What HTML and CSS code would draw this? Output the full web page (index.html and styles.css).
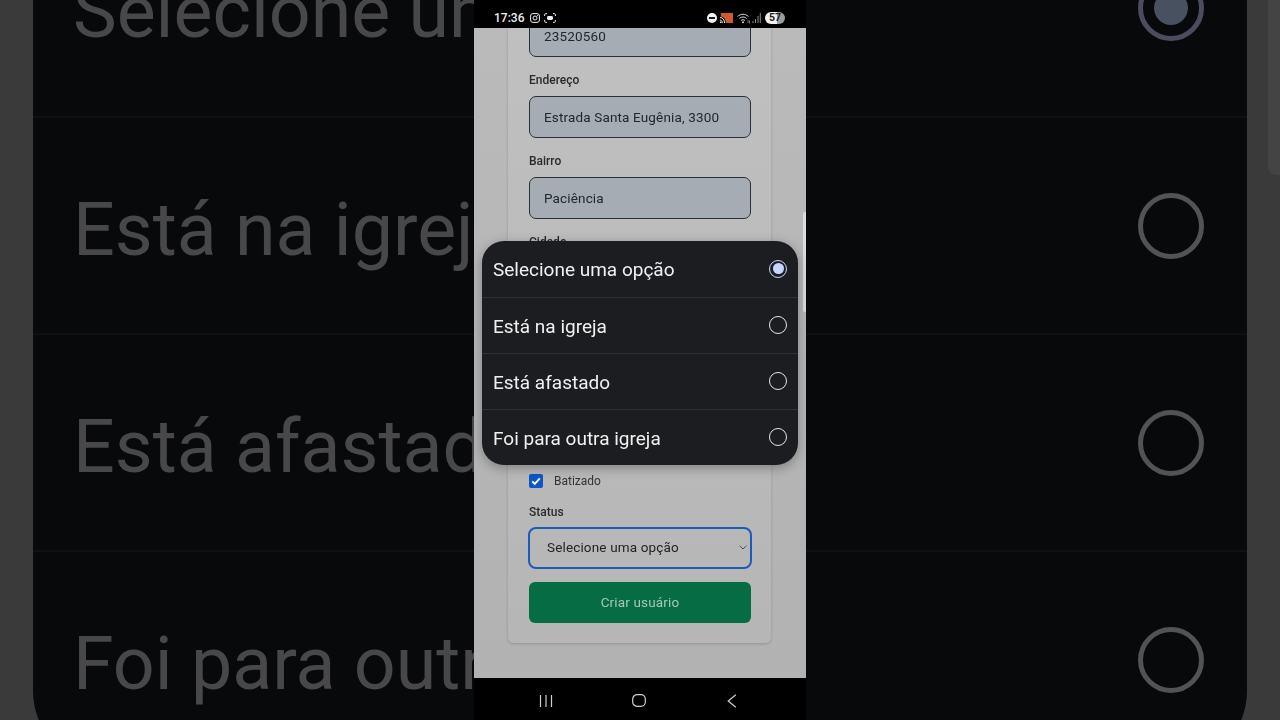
FILE: index.html
```html
<!DOCTYPE html>
<html lang="pt-BR">
<head>
<meta charset="utf-8">
<title>Criar usuário</title>
<link rel="stylesheet" href="styles.css">
</head>
<body>
<div class="stage">
  <div class="side side-left">
    <div class="strip"></div>
    <div class="panel panel-left">
      <div class="bg-row">Selecione uma opção</div>
      <div class="bg-row">Está na igreja</div>
      <div class="bg-row">Está afastado</div>
      <div class="bg-row">Foi para outra igreja</div>
    </div>
  </div>

  <div class="phone">
    <header class="statusbar">
      <span class="time">17:36</span>
      <svg class="ic-insta" viewBox="0 0 10 10"><rect x="0.6" y="0.6" width="8.8" height="8.8" rx="2.4" fill="none" stroke="#eee" stroke-width="1"/><circle cx="5" cy="5" r="2" fill="none" stroke="#eee" stroke-width="1"/><circle cx="7.4" cy="2.6" r=".6" fill="#eee"/></svg>
      <svg class="ic-shot" viewBox="0 0 12 10"><path d="M.6 3V1.8Q.6.6 1.8.6H3M9 .6h1.2q1.2 0 1.2 1.2V3M.6 7v1.2q0 1.2 1.2 1.2H3M9 9.400h1.200q1.200 0 1.200-1.200V7" fill="none" stroke="#eee" stroke-width="1"/><rect x="3" y="3" width="6" height="4" rx="1.400" fill="#eee"/></svg>
      <span class="status-gap"></span>
      <svg class="ic-dnd" viewBox="0 0 10 10"><circle cx="5" cy="5" r="5" fill="#f2f2f2"/><rect x="2" y="4.100" width="6" height="1.800" fill="#000"/></svg>
      <svg class="ic-cast" viewBox="0 0 13 10"><path d="M.8 0H13v10H5.800C5.800 6.400 4 3.800.8 3.500z" fill="#cf5a2b"/><path d="M0 4.500c2.900 0 4.500 2.300 4.500 5.500M0 7c1.500 0 2.300 1.300 2.300 3" fill="none" stroke="#eee" stroke-width="1"/><circle cx=".7" cy="9.300" r=".8" fill="#eee"/></svg>
      <svg class="ic-wifi" viewBox="0 0 13 11"><path d="M.5 3.500C3.800.5 8.200.5 11.500 3.500M2.300 5.500C4.600 3.500 7.400 3.500 9.700 5.500M4 7.500C5.200 6.500 6.800 6.500 8 7.500" fill="none" stroke="#ddd" stroke-width="1"/><circle cx="6" cy="9.300" r="1" fill="#ddd"/><path d="M11 7v3M12.500 7.500v3" stroke="#aaa" stroke-width=".7"/></svg>
      <svg class="ic-signal" viewBox="0 0 9 10"><path d="M1 10V8M3.500 10V6M6 10V3M8.300 10V0" stroke="#8a8a8a" stroke-width="1"/></svg>
      <span class="battery">57</span>
    </header>

    <main class="screen">
      <section class="card">
        <div class="input">23520560</div>
        <div class="label label-gap">Endereço</div>
        <div class="input">Estrada Santa Eugênia, 3300</div>
        <div class="label label-gap">Bairro</div>
        <div class="input">Paciência</div>
        <div class="label label-gap">Cidade</div>
        <div class="covered"></div>
        <div class="check-row">
          <span class="checkbox">
            <svg viewBox="0 0 14 14"><path d="M3.200 7.300l2.600 2.600 5-5.600" fill="none" stroke="#fff" stroke-width="1.900"/></svg>
          </span>
          <span class="check-label">Batizado</span>
        </div>
        <div class="label status-label">Status</div>
        <div class="select">
          <span>Selecione uma opção</span>
          <svg class="chevron" viewBox="0 0 8 5"><path d="M.6.800L4 4 7.400.800" fill="none" stroke="#444" stroke-width=".9"/></svg>
        </div>
        <div class="button">Criar usuário</div>
      </section>
    </main>

    <nav class="navbar">
      <svg class="nav-recent" viewBox="0 0 14 12"><path d="M1.500 0v12M7 0v12M12.500 0v12" stroke="#d0d0d0" stroke-width="1.200"/></svg>
      <svg class="nav-home" viewBox="0 0 14 13"><rect x=".7" y=".7" width="12.600" height="11.600" rx="4.400" fill="none" stroke="#d0d0d0" stroke-width="1.200"/></svg>
      <svg class="nav-back" viewBox="0 0 10 14"><path d="M8.800.7L1.200 7l7.600 6.300" fill="none" stroke="#d0d0d0" stroke-width="1.200"/></svg>
    </nav>

    <div class="scrollbar"></div>

    <div class="dialog">
      <div class="option"><span>Selecione uma opção</span><span class="radio radio-on"></span></div>
      <div class="option"><span>Está na igreja</span><span class="radio"></span></div>
      <div class="option"><span>Está afastado</span><span class="radio"></span></div>
      <div class="option"><span>Foi para outra igreja</span><span class="radio"></span></div>
    </div>
  </div>

  <div class="side side-right">
    <div class="panel panel-right">
      <div class="bg-row"><span class="bg-radio bg-radio-on"></span></div>
      <div class="bg-row"><span class="bg-radio"></span></div>
      <div class="bg-row"><span class="bg-radio"></span></div>
      <div class="bg-row"><span class="bg-radio"></span></div>
    </div>
    <div class="strip strip-right"><div class="bg-scroll"></div></div>
  </div>
</div>
</body>
</html>
```

FILE: styles.css
```css
* { box-sizing: border-box; }
html, body { margin: 0; height: 100%; }
body { background: #000; font-family: Roboto, "Liberation Sans", sans-serif; overflow: hidden; }
.stage { display: grid; grid-template-columns: 474px 332px 474px; width: 1280px; height: 720px; overflow: hidden; }

/* blurred backdrop */
.side { display: flex; height: 720px; overflow: hidden; background: #3a3a3a; }
.strip { width: 33px; flex: none; background: #3a3a3a; }
.strip-right { display: flex; justify-content: flex-end; }
.bg-scroll { width: 12px; height: 175px; background: #444; border-radius: 0 0 0 8px; }
.panel { flex: 1; height: 868px; margin-top: -101px; background: #08090b; }
.panel-left { border-bottom-left-radius: 76px; }
.panel-right { border-bottom-right-radius: 76px; }
.bg-row { height: 217px; display: flex; align-items: center; border-top: 2px solid #0f1012; white-space: nowrap; overflow: hidden; }
.bg-row:first-child { border-top: 0; }
.panel-left .bg-row { padding: 8px 0 0 40px; font-size: 73.500px; color: #48484a; filter: blur(.7px); }
.panel-right .bg-row { justify-content: flex-end; padding-right: 43px; }
.bg-radio { width: 66px; height: 66px; border-radius: 50%; border: 5px solid #535356; display: block; filter: blur(.5px); }
.bg-radio-on { border-color: #4b4d5e; position: relative; }
.bg-radio-on::after { content: ""; position: absolute; inset: 11px; border-radius: 50%; background: #475160; }

/* phone */
.phone { position: relative; display: flex; flex-direction: column; height: 720px; background: #000; overflow: hidden; }
.statusbar { height: 28px; flex: none; display: flex; align-items: center; padding: 8px 21px 0 20px; background: #000; color: #eee; }
.time { font-size: 12px; font-weight: 500; margin-right: 6px; }
.statusbar svg { display: block; flex: none; }
.ic-insta { width: 10px; height: 10px; margin-right: 4px; }
.ic-shot { width: 12px; height: 10px; }
.status-gap { flex: 1; }
.ic-dnd { width: 10px; height: 10px; margin-right: 3px; }
.ic-cast { width: 13px; height: 10px; margin-right: 4px; }
.ic-wifi { width: 13px; height: 11px; margin-right: 2px; }
.ic-signal { width: 9px; height: 10px; margin-right: 4px; }
.battery { width: 20px; height: 12px; border-radius: 6px; background: linear-gradient(90deg, #f2f2f2 58%, #9c9c9c 58%); color: #222; font-size: 10.500px; font-weight: 700; line-height: 12px; text-align: center; }

.screen { height: 650px; flex: none; overflow: hidden; background: linear-gradient(#bababa, #b2b2b2); padding-left: 34px; }
.card { width: 263px; height: 635px; margin-top: -20px; padding: 7px 20px 0 21px; background: linear-gradient(#c0c0c0, #b6b6b6); border-radius: 0 0 6px 6px; box-shadow: 0 1px 3px rgba(0,0,0,.18); color: #1d1d1f; filter: blur(.25px); }
.label { height: 14px; font-size: 12px; line-height: 14px; font-weight: 500; color: #2a2a2c; }
.label-gap { margin: 16px 0 9px; }
.input { height: 42px; padding-left: 14px; display: flex; align-items: center; background: #a6acb4; border: 1px solid #2b3038; border-radius: 7px; font-size: 13.500px; letter-spacing: .15px; color: #23262b; }
.covered { height: 216px; }
.check-row { display: flex; align-items: center; height: 14px; }
.checkbox { width: 14px; height: 14px; border-radius: 2px; background: #0c56c9; flex: none; }
.checkbox svg { display: block; width: 14px; height: 14px; }
.check-label { margin-left: 11px; font-size: 12px; color: #333; }
.status-label { margin: 17px 0 8px; }
.select { display: flex; align-items: center; justify-content: space-between; height: 42px; width: 224px; margin-left: -1px; padding: 0 3px 2px 17px; border: 2px solid #1b5cb8; border-radius: 8px; font-size: 13.500px; letter-spacing: .15px; color: #232325; }
.chevron { width: 8px; height: 5px; display: block; }
.button { height: 41px; margin-top: 13px; padding-bottom: 1px; display: flex; align-items: center; justify-content: center; background: #056c43; border-radius: 6px; color: #a3c9b5; font-size: 13.500px; letter-spacing: .15px; }

.navbar { height: 42px; flex: none; display: flex; align-items: center; padding: 3px 0 0 65px; background: #000; }
.navbar svg { display: block; flex: none; }
.nav-recent { width: 14px; height: 12px; margin-right: 79px; }
.nav-home { width: 14px; height: 13px; margin-right: 81px; }
.nav-back { width: 10px; height: 14px; }

.scrollbar { position: absolute; right: 0; top: 212px; width: 3px; height: 100px; background: #dcdcdc; border-radius: 2px 0 0 2px; }

.dialog { position: absolute; left: 8px; top: 241px; width: 316px; height: 224px; background: #1c1d21; border-radius: 22px; box-shadow: 0 3px 12px rgba(0,0,0,.3); overflow: hidden; filter: blur(.2px); }
.option { height: 56px; padding: 1px 11px 0 11px; display: flex; align-items: center; justify-content: space-between; border-top: 1px solid #2f3035; color: #f0f0f0; font-size: 19px; }
.option:first-child { border-top: 0; }
.radio { width: 18px; height: 18px; margin-top: -2px; border-radius: 50%; border: 1.700px solid #e6e6e6; position: relative; }
.radio-on { border-color: #c6d6ff; }
.radio-on::after { content: ""; position: absolute; inset: 2.500px; border-radius: 50%; background: #c6d6ff; }
```
